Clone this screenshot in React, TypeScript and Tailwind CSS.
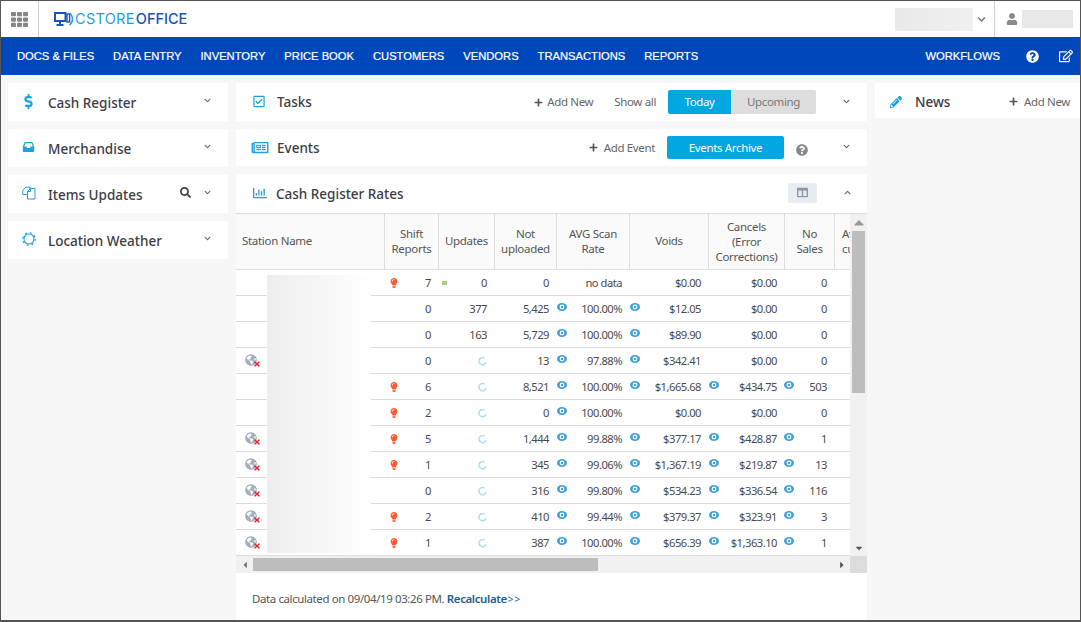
import React from "react";
import { FaTh, FaDollarSign, FaRegCheckSquare, FaRegNewspaper, FaRegChartBar, FaSearch, FaQuestionCircle, FaRegEdit, FaPencilAlt, FaPlus, FaUser, FaChevronDown, FaChevronUp, FaColumns, FaLightbulb, FaGlobeAmericas, FaTimes, FaCaretUp, FaCaretDown, FaCaretLeft, FaCaretRight } from "react-icons/fa";

const Chev = () => <FaChevronDown className="text-[7px] text-[#666] -mt-[3px]" />;

const Eye = () => (
  <svg width="10" height="8" viewBox="0 0 10 8" className="shrink-0 -mt-[3px]">
    <ellipse cx="5" cy="4" rx="5" ry="4" fill="#3f9fdc" />
    <circle cx="5" cy="4" r="2.4" fill="#fff" />
    <circle cx="5" cy="4" r="1.2" fill="#3f9fdc" />
  </svg>
);

const Spin = () => (
  <svg width="9" height="9" viewBox="0 0 9 9">
    <path d="M6.6 1.2 A3.6 3.6 0 1 0 8 5.2" fill="none" stroke="#a9e3f3" strokeWidth="1.6" />
  </svg>
);

const Globe = () => (
  <span className="relative block w-[15px] h-[13px] -mt-[1px]">
    <FaGlobeAmericas className="text-[12px] text-[#a4aebc]" />
    <FaTimes className="absolute -right-px -bottom-px text-[8px] text-[#f01c2e]" />
  </span>
);

const InboxIcon = () => (
  <svg width="13" height="12" viewBox="0 0 13 12">
    <path d="M2.6 1h7.8L12.2 6v4a1 1 0 0 1-1 1H1.8a1 1 0 0 1-1-1V6z" fill="#1ba1dd" />
    <path d="M3.4 2.2h6.2L10.8 5.6H8.6L8 7H5L4.4 5.6H2.2z" fill="#fff" />
  </svg>
);

const DocsIcon = () => (
  <svg width="14" height="14" viewBox="0 0 14 14" fill="none" stroke="#1ba1dd" strokeWidth="1">
    <path d="M0.8 4.5 3.8 1.2H8V8.5H0.8z" />
    <path d="M5.5 5.5 8.5 2.5H13V13H5.5z" fill="#fff" />
    <path d="M5.5 5.5H8.5V2.5" />
  </svg>
);

const WeatherIcon = () => (
  <svg width="14" height="14" viewBox="0 0 14 14">
    <circle cx="7" cy="7" r="5" fill="none" stroke="#1ba1dd" strokeWidth="1.1" />
    <circle cx="7" cy="7" r="6.2" fill="none" stroke="#1ba1dd" strokeWidth="1.3" strokeDasharray="2 2.87" />
  </svg>
);

const Side = ({ icon, title, extra }: { icon: React.ReactNode; title: string; extra?: React.ReactNode }) => (
  <div className="h-[38px] bg-white flex items-center pl-[14px] pr-[17px]">
    <span className="w-[26px] text-[#1ba1dd] flex justify-start -mt-[2px]">{icon}</span>
    <span className="text-[13.5px] font-medium text-[#3c3c46] flex-1 pt-[2px]">{title}</span>
    {extra}
    <Chev />
  </div>
);

type Row = { g?: boolean; b?: boolean; s: string; sq?: boolean; sp?: boolean; u: string; n: string; e1?: boolean; a: string; e2?: boolean; v: string; e3?: boolean; c: string; e4?: boolean; no: string };

const rows: Row[] = [
  { b: true, s: "7", sq: true, u: "0", n: "0", a: "no data", v: "$0.00", c: "$0.00", no: "0" },
  { s: "0", u: "377", n: "5,425", e1: true, a: "100.00%", e2: true, v: "$12.05", c: "$0.00", no: "0" },
  { s: "0", u: "163", n: "5,729", e1: true, a: "100.00%", e2: true, v: "$89.90", c: "$0.00", no: "0" },
  { g: true, s: "0", sp: true, u: "", n: "13", e1: true, a: "97.88%", e2: true, v: "$342.41", c: "$0.00", no: "0" },
  { b: true, s: "6", sp: true, u: "", n: "8,521", e1: true, a: "100.00%", e2: true, v: "$1,665.68", e3: true, c: "$434.75", e4: true, no: "503" },
  { b: true, s: "2", sp: true, u: "", n: "0", e1: true, a: "100.00%", v: "$0.00", c: "$0.00", no: "0" },
  { g: true, b: true, s: "5", sp: true, u: "", n: "1,444", e1: true, a: "99.88%", e2: true, v: "$377.17", e3: true, c: "$428.87", e4: true, no: "1" },
  { g: true, b: true, s: "1", sp: true, u: "", n: "345", e1: true, a: "99.06%", e2: true, v: "$1,367.19", e3: true, c: "$219.87", e4: true, no: "13" },
  { g: true, s: "0", sp: true, u: "", n: "316", e1: true, a: "99.80%", e2: true, v: "$534.23", e3: true, c: "$336.54", e4: true, no: "116" },
  { g: true, b: true, s: "2", sp: true, u: "", n: "410", e1: true, a: "99.44%", e2: true, v: "$379.37", e3: true, c: "$323.91", e4: true, no: "3" },
  { g: true, b: true, s: "1", sp: true, u: "", n: "387", e1: true, a: "100.00%", e2: true, v: "$656.39", e3: true, c: "$1,363.10", e4: true, no: "1" },
];

const Th = ({ w, children }: { w: string; children: React.ReactNode }) => (
  <div className={`${w} shrink-0 border-r border-[#dddddd] flex items-center justify-center text-center leading-[15px] pb-[2px]`}>
    <span>{children}</span>
  </div>
);

export default function App() {
  return (
    <div className="w-[1081px] h-[622px] overflow-hidden border-t border-l border-r border-b-2 border-[#555555] bg-[#f7f7f7] flex flex-col text-[#444]" style={{ fontFamily: '"Noto Sans", sans-serif' }}>
      <header className="h-[36px] shrink-0 bg-white flex items-center">
        <div className="w-[38px] h-full border-r border-[#d0d0d0] flex items-center justify-center">
          <FaTh className="text-[17px] text-[#858585]" />
        </div>
        <div className="ml-[15px] flex items-center">
          <svg width="20" height="14" viewBox="0 0 20 14" className="mr-[1px]">
            <rect x="1" y="1" width="10.5" height="8" fill="none" stroke="#1c53b8" strokeWidth="2" />
            <path d="M6 9v3M2.5 13h7" stroke="#1c53b8" strokeWidth="2" />
            <rect x="13" y="2" width="2.6" height="8" fill="none" stroke="#1c53b8" strokeWidth="1.4" />
            <path d="M15.5 1c4 3 4 9 0 12" fill="none" stroke="#1e9fe0" strokeWidth="1.5" />
          </svg>
          <span className="text-[14.5px] leading-none text-[#1e9fe0] tracking-[0.3px]" style={{ fontFamily: '"Inter", sans-serif' }}>CSTORE</span>
          <span className="text-[14.5px] leading-none text-[#1c53b8] font-medium ml-[1px]" style={{ fontFamily: '"Inter", sans-serif' }}>OFFICE</span>
        </div>
        <div className="ml-auto h-full flex items-center">
          <div className="w-[78px] h-[23px] bg-gradient-to-r from-[#e9e9e9] to-[#f0f0f0]" />
          <FaChevronDown className="ml-[2px] mr-[6px] w-[13px] text-[9px] text-[#777]" />
          <div className="h-full border-l border-[#d0d0d0] pl-[11px] pr-[7px] flex items-center">
            <FaUser className="text-[12px] text-[#8a8a8a] mr-[4px]" />
            <div className="w-[51px] h-[18px] bg-[#e8e8e8]" />
          </div>
        </div>
      </header>

      <nav className="h-[38px] shrink-0 bg-[#0047bb] flex items-center pl-[16px] pr-[7px] gap-[19px] text-white text-[11.2px] font-medium [-webkit-text-stroke:0.2px_white]" style={{ fontFamily: '"Liberation Sans", sans-serif' }}>
        <span>DOCS &amp; FILES</span>
        <span>DATA ENTRY</span>
        <span>INVENTORY</span>
        <span>PRICE BOOK</span>
        <span>CUSTOMERS</span>
        <span>VENDORS</span>
        <span>TRANSACTIONS</span>
        <span>REPORTS</span>
        <span className="ml-auto mr-[7px]">WORKFLOWS</span>
        <FaQuestionCircle className="text-[13px]" />
        <FaRegEdit className="text-[14px] ml-[1px]" />
      </nav>

      <main className="flex-1 min-h-0 flex gap-[8px] pl-[7px] pt-[8px]">
        <aside className="w-[220px] shrink-0 flex flex-col gap-[8px]">
          <Side icon={<FaDollarSign className="text-[15px] -ml-[1px]" />} title="Cash Register" />
          <Side icon={<InboxIcon />} title="Merchandise" />
          <Side icon={<DocsIcon />} title="Items Updates" extra={<FaSearch className="text-[11px] text-[#444] mr-[13px] -mt-[3px]" />} />
          <Side icon={<WeatherIcon />} title="Location Weather" />
        </aside>

        <section className="w-[631px] shrink-0 flex flex-col gap-[8px] min-h-0">
          <div className="h-[38px] shrink-0 bg-white flex items-center pl-[17px] text-[11.5px] tracking-[-0.35px] text-[#666]">
            <FaRegCheckSquare className="text-[13px] text-[#1ba1dd] w-[24px] -ml-[6px] -mt-[2px]" />
            <span className="text-[13.5px] tracking-normal font-medium text-[#3c3c46] ml-[6px]">Tasks</span>
            <span className="ml-auto flex items-center"><FaPlus className="text-[9px] text-[#555] mr-[4px]" />Add New</span>
            <span className="ml-[21px]">Show all</span>
            <div className="ml-[12px] flex h-[24px] rounded-[2px] overflow-hidden text-center leading-[24px]">
              <span className="w-[63px] bg-[#00a7e1] text-white">Today</span>
              <span className="w-[85px] bg-[#dddddd] text-[#777]">Upcoming</span>
            </div>
            <FaChevronDown className="text-[7px] text-[#666] ml-[27px] mr-[17px] -mt-[2px]" />
          </div>

          <div className="h-[37px] shrink-0 bg-white flex items-center pl-[17px] text-[11.5px] tracking-[-0.35px] text-[#666]">
            <FaRegNewspaper className="text-[15px] text-[#1ba1dd] w-[24px] -ml-[5px] -mt-[1px]" />
            <span className="text-[13.5px] tracking-normal font-medium text-[#3c3c46] ml-[5px] pt-[2px]">Events</span>
            <span className="ml-auto flex items-center"><FaPlus className="text-[9px] text-[#555] mr-[6px]" />Add Event</span>
            <span className="ml-[12px] w-[117px] h-[23px] leading-[23px] text-center bg-[#00a7e1] text-white rounded-[2px]">Events Archive</span>
            <FaQuestionCircle className="text-[12px] text-[#888] ml-[12px] mt-[4px]" />
            <FaChevronDown className="text-[7px] text-[#666] ml-[35px] mr-[17px] -mt-[2px]" />
          </div>

          <div className="flex-1 min-h-0 bg-white flex flex-col">
            <div className="h-[39px] shrink-0 flex items-center pl-[17px]">
              <FaRegChartBar className="text-[14px] text-[#1ba1dd] w-[24px] -ml-[5px] -mt-[2px]" />
              <span className="text-[13.5px] font-medium text-[#3c3c46] ml-[4px] pt-[2px]">Cash Register Rates</span>
              <span className="ml-auto w-[29px] h-[20px] mb-[2px] rounded-[2px] bg-[#e9edf2] flex items-center justify-center"><FaColumns className="text-[11px] text-[#8a97a8]" /></span>
              <FaChevronUp className="text-[7px] text-[#666] ml-[27px] mr-[16px] -mt-[2px]" />
            </div>

            <div className="flex h-[343px] text-[11.5px] tracking-[-0.3px] text-[#555]">
              <div className="w-[614px] shrink-0 flex flex-col">
                <div className="relative w-[614px] h-[343px] overflow-hidden">
                  <div className="h-[57px] flex bg-[#fafafa] border-y border-[#dddddd] w-[700px]">
                    <div className="w-[149px] shrink-0 border-r border-[#dddddd] flex items-center pl-[6px] pb-[2px]">Station Name</div>
                    <Th w="w-[54px]">Shift<br />Reports</Th>
                    <Th w="w-[56px]">Updates</Th>
                    <Th w="w-[62px]">Not<br />uploaded</Th>
                    <Th w="w-[73px]">AVG Scan<br />Rate</Th>
                    <Th w="w-[79px]">Voids</Th>
                    <Th w="w-[76px]"><span className="block mt-[2px]">Cancels<br />(Error<br />Corrections)</span></Th>
                    <Th w="w-[50px]">No<br />Sales</Th>
                    <div className="flex-1 flex items-center pl-[7px] leading-[15px] whitespace-nowrap pb-[2px]"><span>Avg<br />customers</span></div>
                  </div>
                  {rows.map((r, i) => (
                    <div key={i} className="h-[26px] flex items-center border-b border-[#dddddd] pt-[1px] text-[#4a4a4a] text-[11.2px] tracking-[-0.5px]">
                      <div className="w-[148px] shrink-0 pl-[9px]">{r.g && <Globe />}</div>
                      <div className="w-[54px] shrink-0 flex items-center pl-[5px] pr-[7px]">
                        {r.b && <FaLightbulb className="text-[10px] text-[#ff5a2e]" />}
                        <span className="ml-auto">{r.s}</span>
                      </div>
                      <div className="w-[56px] shrink-0 flex items-center justify-end pl-[4px] pr-[7px]">
                        {r.sq && <span className="w-[5px] h-[4px] bg-[#a5d27e] mr-auto" />}
                        {r.sp ? <Spin /> : <span>{r.u}</span>}
                      </div>
                      <div className="w-[62px] shrink-0 text-right pr-[7px]">{r.n}</div>
                      <div className="w-[73px] shrink-0 flex items-center pl-[1px] pr-[7px]">
                        {r.e1 && <Eye />}
                        <span className="ml-auto">{r.a}</span>
                      </div>
                      <div className="w-[79px] shrink-0 flex items-center pl-[1px] pr-[7px]">
                        {r.e2 && <Eye />}
                        <span className="ml-auto">{r.v}</span>
                      </div>
                      <div className="w-[76px] shrink-0 flex items-center pl-[1px] pr-[7px]">
                        {r.e3 && <Eye />}
                        <span className="ml-auto">{r.c}</span>
                      </div>
                      <div className="w-[50px] shrink-0 flex items-center pl-0 pr-[7px]">
                        {r.e4 && <Eye />}
                        <span className="ml-auto">{r.no}</span>
                      </div>
                    </div>
                  ))}
                  <div className="absolute left-[31px] top-[62px] w-[104px] h-[278px] bg-gradient-to-r from-[#eeeeee] via-[#f6f6f6] to-white" />
                </div>
              </div>
              <div className="w-[17px] shrink-0 bg-[#f1f1f1] flex flex-col items-center border-t border-[#dddddd]">
                <FaCaretUp className="text-[10px] text-[#999] h-[17px]" />
                <div className="w-[13px] h-[162px] bg-[#bdbdbd]" />
                <FaCaretDown className="text-[10px] text-[#555] mt-auto mb-[3px]" />
              </div>
            </div>

            <div className="h-[17px] shrink-0 flex bg-[#f1f1f1]">
              <div className="w-[17px] flex items-center justify-center"><FaCaretLeft className="text-[10px] text-[#777]" /></div>
              <div className="w-[345px] h-[13px] my-[2px] bg-[#bdbdbd]" />
              <div className="ml-auto w-[17px] flex items-center justify-center"><FaCaretRight className="text-[10px] text-[#555]" /></div>
              <div className="w-[17px] bg-[#dcdcdc]" />
            </div>

            <div className="flex-1 flex items-center pl-[16px] text-[11.5px] tracking-[-0.4px] text-[#555] pt-[4px]">
              <span>Data calculated on 09/04/19 03:26 PM. <span className="font-semibold text-[#1c5f8f]">Recalculate</span><span className="text-[#1c5f8f] text-[10px] tracking-[1px] ml-[1px]">&gt;&gt;</span></span>
            </div>
          </div>
        </section>

        <aside className="flex-1 min-w-0">
          <div className="h-[35px] bg-white flex items-center pl-[15px] pr-[10px] pt-[2px]">
            <FaPencilAlt className="text-[12px] text-[#1ba1dd] mr-[13px]" />
            <span className="text-[13.5px] font-medium text-[#3c3c46] pt-[1px]">News</span>
            <span className="ml-auto flex items-center text-[11.5px] tracking-[-0.35px] text-[#666]"><FaPlus className="text-[9px] text-[#555] mr-[6px]" />Add New</span>
          </div>
        </aside>
      </main>
    </div>
  );
}
